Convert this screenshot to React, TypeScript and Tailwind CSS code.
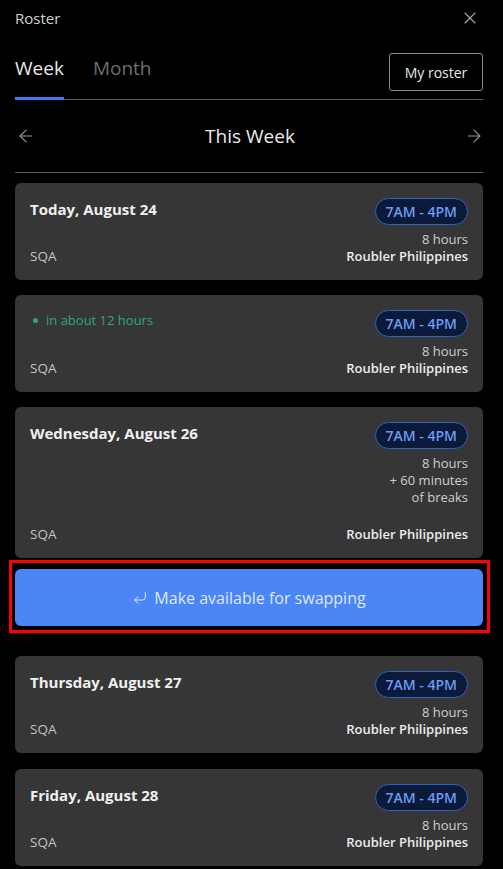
import React from 'react';
import { X, ArrowLeft, ArrowRight, CornerDownLeft } from 'lucide-react';

interface Shift {
    title: string;
    upcoming?: boolean;
    extra?: string[];
}

const shifts: Shift[] = [
    { title: 'Today, August 24' },
    { title: 'in about 12 hours', upcoming: true },
    { title: 'Wednesday, August 26', extra: ['+ 60 minutes', 'of breaks'] },
    { title: 'Thursday, August 27' },
    { title: 'Friday, August 28' },
];

const ShiftCard: React.FC<{ shift: Shift }> = ({ shift }) => (
    <div className="flex justify-between rounded-[6px] bg-[#363636] pt-[15px] pb-[15px] px-[15px]">
        <div className="flex flex-col justify-between">
            {shift.upcoming ? (
                <div className="flex items-center gap-[8px] leading-[20px] text-[13px] text-[#2fa878]">
                    <span className="w-[5px] h-[5px] rounded-full bg-[#2fa878] ml-[3px]" />
                    in about 12 hours
                </div>
            ) : (
                <div className="text-[15px] font-bold leading-[22px] text-[#f0f0f0]">{shift.title}</div>
            )}
            <div className="text-[13.5px] leading-[17px] text-[#c4c4c4]">SQA</div>
        </div>
        <div className="flex flex-col items-end">
            <div className="h-[27px] px-[10px] flex items-center rounded-full border border-[#3461c4] bg-[#0b1a38] text-[14px] font-semibold text-[#6c9af2]">
                7AM - 4PM
            </div>
            <div className="mt-[6px] text-[13px] leading-[17px] text-[#cfcfcf] text-right">
                <div>8 hours</div>
                {shift.extra?.map((line) => (
                    <div key={line}>{line}</div>
                ))}
            </div>
            <div className={`${shift.extra ? 'mt-[20px]' : ''} text-[13px] leading-[17px] font-semibold text-[#ececec]`}>
                Roubler Philippines
            </div>
        </div>
    </div>
);

export default function App() {
    return (
        <div className="min-h-[869px] w-[503px] bg-black font-['Open_Sans',sans-serif] text-white">
            <div className="h-[36px] flex items-center justify-between pl-[15px] pr-[20px]">
                <span className="text-[15px] text-[#d2d2d2]">Roster</span>
                <X className="w-[20px] h-[20px] text-[#a8a8a8] mr-[3px]" strokeWidth={1.3} />
            </div>

            <div className="ml-[15px] mr-[20px] flex items-end justify-between border-b border-[#575757]">
                <div className="flex gap-[29px]">
                    <div className="text-[19px] leading-[24px] pt-[20px] pb-[17px] text-[#e8e8e8] border-b-[3px] border-[#3b7cf0] -mb-[1px]">
                        Week
                    </div>
                    <div className="text-[19px] leading-[24px] pt-[20px] pb-[19px] text-[#6e6e6e]">Month</div>
                </div>
                <button className="mb-[8px] h-[38px] w-[94px] rounded-[3px] border border-[#8a8a8a] text-[14px] text-[#e8e8e8]">
                    My roster
                </button>
            </div>

            <div className="ml-[15px] mr-[20px] h-[73px] flex items-center justify-between border-b border-[#575757]">
                <ArrowLeft className="w-[20px] h-[20px] text-[#9a9a9a] ml-[1px]" strokeWidth={1.3} />
                <span className="text-[19px] text-[#ececec]">This Week</span>
                <ArrowRight className="w-[20px] h-[20px] text-[#9a9a9a] -mr-[1px]" strokeWidth={1.3} />
            </div>

            <div className="ml-[15px] mr-[20px] pt-[10px] flex flex-col">
                <ShiftCard shift={shifts[0]} />
                <div className="mt-[15px]">
                    <ShiftCard shift={shifts[1]} />
                </div>
                <div className="mt-[15px]">
                    <ShiftCard shift={shifts[2]} />
                </div>
                <div className="relative mt-[11px]">
                    <button className="w-full h-[57px] rounded-[6px] bg-[#4a86f6] flex items-center justify-center gap-[6px] text-[16px] text-[#dfe8fc]">
                        <CornerDownLeft className="w-[16px] h-[16px]" strokeWidth={1.5} />
                        Make available for swapping
                    </button>
                    <div className="absolute -left-[6px] -right-[7px] -top-[9px] -bottom-[7px] border-[3px] border-[#ff0000] pointer-events-none" />
                </div>
                <div className="mt-[30px]">
                    <ShiftCard shift={shifts[3]} />
                </div>
                <div className="mt-[16px]">
                    <ShiftCard shift={shifts[4]} />
                </div>
            </div>
        </div>
    );
}
